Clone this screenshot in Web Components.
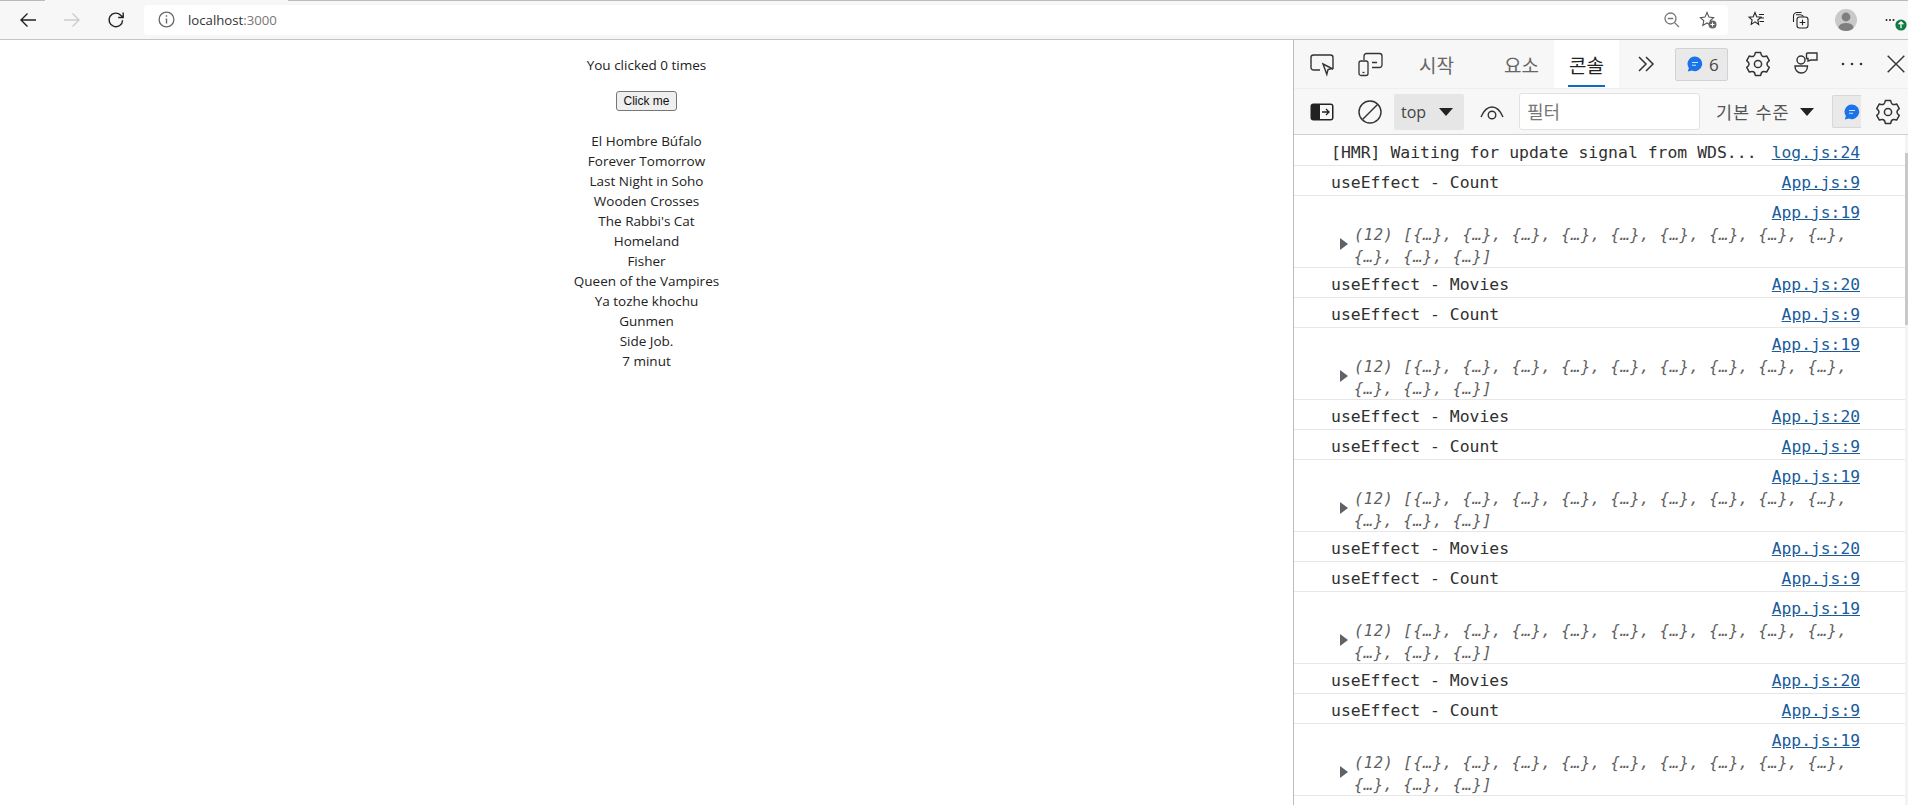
<!DOCTYPE html>
<html lang="ko"><head><meta charset="utf-8"><title>localhost:3000</title>
<style>
html,body{margin:0;height:805px;overflow:hidden;background:#fff;font-family:"Open Sans","Noto Sans CJK KR",sans-serif}
browser-window{height:805px}
</style></head><body>
<browser-window>
  <browser-toolbar></browser-toolbar>
  <div slot="page" style="display:contents"><demo-page></demo-page></div>
  <dev-tools slot="tools"></dev-tools>
</browser-window>
<script>
const S=(w,h,body,extra='')=>`<svg width="${w}" height="${h}" viewBox="0 0 ${w} ${h}" fill="none" stroke="currentColor" stroke-width="1.3" style="display:block;flex:none;overflow:visible;${extra}">${body}</svg>`;
const gearPath=(()=>{const p=(deg,r)=>{const t=deg*Math.PI/180;return (13+r*Math.cos(t)).toFixed(2)+' '+(13+r*Math.sin(t)).toFixed(2)};let d='';for(let i=0;i<6;i++){const a=i*60-90;d+=(i?'L':'M')+p(a-13,11.8)+' L'+p(a+13,11.8)+' Q'+p(a+30,6.6)+' '+p(a+47,11.8)+' '}return d+'Z'})();
const gear=()=>S(26,26,`<path d="${gearPath}" stroke-width="1.500" stroke-linejoin="round"/><circle cx="13" cy="13" r="3.600" stroke-width="1.500"/>`);
const bubble=`<svg width="16" height="16" viewBox="0 0 16 16" style="display:block;flex:none"><path d="M8 .5a7.300 7.300 0 1 1-3 14L.8 15.600l1.100-3.600A7.300 7.300 0 0 1 8 .5z" fill="#1a73e8"/><path d="M5 6.500h6M5 9.200h4" stroke="#cfe2fb" stroke-width="1.100"/></svg>`;
function def(name,html,init){customElements.define(name,class extends HTMLElement{constructor(){super();this.attachShadow({mode:'open'}).innerHTML=typeof html==='function'?html(this):html}connectedCallback(){init&&init(this)}})}

def('browser-window',`<style>
:host{display:block;width:1908px}
.main{display:flex;height:765px}
.p{width:1293px;flex:none}.t{flex:1;min-width:0}
</style><slot></slot><div class="main"><div class="p"><slot name="page"></slot></div><div class="t"><slot name="tools"></slot></div></div>`);

def('browser-toolbar',`<style>
:host{display:flex;align-items:center;height:39px;background:#f7f7f7;border-bottom:1px solid #c4c4c4;color:#222;box-sizing:content-box;position:relative}
.strip{position:absolute;left:0;right:0;top:0;height:1px;background:linear-gradient(90deg,#bbb 45px,#f7f7f7 45px,#f7f7f7 288px,#bbb 288px)}
.nav{display:flex;align-items:center;flex:none}
.bar{margin-left:19px;width:1584px;height:30px;background:#fff;border-radius:4px;display:flex;align-items:center;flex:none;box-sizing:border-box;padding-left:14px}
.url{margin-left:13px;font:13.200px "Open Sans",sans-serif;color:#333}.url span{color:#777}
.right{margin-left:auto;display:flex;align-items:center;gap:0;color:#555}
.ava{width:22px;height:22px;border-radius:50%;background:#c9c9c9;overflow:hidden}
</style><div class="strip"></div><div class="nav" style="padding-left:19px">
${S(18,16,'<path d="M17 8H2M8.500 1.500 2 8l6.500 6.500" stroke-width="1.400"/>')}
<span style="margin-left:26px;color:#ccc">${S(18,16,'<path d="M1 8h15M9.500 1.500 16 8l-6.500 6.500" stroke-width="1.400"/>')}</span>
<span style="margin-left:26px">${S(18,18,'<path d="M15.600 9.200a6.800 6.800 0 1 1-1.900-5L16 6.300M16.200 1.500v5h-5" stroke-width="1.400"/>')}</span></div>
<div class="bar"><span style="color:#666">${S(17,17,'<circle cx="8.500" cy="8.500" r="7.400"/><path d="M8.500 7.500v5M8.500 4.200v1.600" stroke-width="1.400"/>')}</span><span class="url">localhost<span>:3000</span></span>
<div class="right" style="color:#777"><span style="margin-right:19px">${S(16,16,'<circle cx="6.500" cy="6.500" r="5.500"/><path d="M3.800 6.500h5.400M10.600 10.600 15 15"/>')}</span>
<span style="margin-right:11px;color:#555">${S(18,18,'<path d="M8 1.500l2 4.600 4.600.5-3.400 3.200 1 4.600L8 12l-4.200 2.400 1-4.600L1.400 6.600 6 6.100z" stroke-width="1.100"/><circle cx="13.500" cy="13.500" r="4" fill="#666" stroke="none"/><path d="M11.500 13.500h4M13.500 11.500v4" stroke="#fff" stroke-width="1"/>')}</span></div></div>
<div class="right" style="flex:1;color:#222;justify-content:flex-start">
<span style="margin-left:20px">${S(17,17,'<path d="M7 1.500l1.700 4.200 4.300.4-3.200 2.900.9 4.500L7 10.900l-3.800 2.500.9-4.500L1 6.100l4.200-.4zM11 3.500h5M12.500 7h3.500M11.500 10.500h4.500" stroke-width="1.100"/>')}</span>
<span style="margin-left:26px">${S(18,18,'<path d="M2.500 11V5.200C2.500 3 4 1.500 6 1.500h4.500M5 3.800h4.500c1.500 0 2.200 1 3 1.800" stroke-width="1.100"/><rect x="6" y="6" width="11" height="11" rx="2.500" stroke-width="1.100"/><path d="M11.500 8.700v5.600M8.700 11.500h5.600" stroke-width="1.100"/>')}</span>
<span style="margin-left:26px" class="ava"><svg width="22" height="22" viewBox="0 0 22 22" style="display:block"><circle cx="11" cy="8" r="4.400" fill="#7f7f7f"/><ellipse cx="11" cy="18.500" rx="7.500" ry="4.600" fill="#7f7f7f"/></svg></span>
<span style="margin-left:28px;position:relative;width:22px;height:22px;display:block"><svg width="22" height="22" viewBox="0 0 22 22" style="display:block"><circle cx="1.500" cy="11" r="1" fill="#222"/><circle cx="5" cy="11" r="1" fill="#222"/><circle cx="8.500" cy="11" r="1" fill="#222"/><circle cx="16" cy="16" r="5.600" fill="#107c41"/><path d="M16 19.300v-6.200M13.600 15.300 16 13l2.400 2.300" stroke="#fff" stroke-width="1.300" fill="none"/></svg></span>
</div>`);

def('demo-page',`<style>
:host{display:block;text-align:center;font:13.500px/20px "Open Sans","Noto Sans",sans-serif;color:#222;padding-top:15px}
p{margin:0}
button{display:block;margin:16px auto 20px;width:61px;height:20px;box-sizing:border-box;padding:0;font:12px "Liberation Sans",Arial,sans-serif;color:#111;background:#efefef;border:1px solid #767676;border-radius:3px}
</style><p>You clicked 0 times</p><button>Click me</button><div id="l"></div>`,
el=>{el.shadowRoot.getElementById('l').innerHTML=["El Hombre Búfalo","Forever Tomorrow","Last Night in Soho","Wooden Crosses","The Rabbi's Cat","Homeland","Fisher","Queen of the Vampires","Ya tozhe khochu","Gunmen","Side Job.","7 minut"].map(t=>`<div>${t}</div>`).join('')});

def('tool-tab',`<style>
:host{display:flex;align-items:center;justify-content:center;height:48px;box-sizing:border-box;font:19px "Noto Sans CJK KR",sans-serif;color:#666;padding:0 13px;position:relative;white-space:nowrap}
:host([active]){background:#fff;color:#222}
:host([active])::after{content:"";position:absolute;left:14px;right:14px;bottom:1px;height:2px;background:#0f6cbd}
</style><slot></slot>`);

def('console-row',h=>{
 const n=h.getAttribute('kind');const src=h.getAttribute('src');
 const link=`<a>${src}</a>`;
 const style=`<style>
:host{display:block;box-sizing:border-box;height:30px;border-bottom:1px solid #e6e6e6;font:16.450px/22px "DejaVu Sans Mono","Liberation Mono",monospace;color:#303030;padding:6px 48px 0 37px;white-space:pre}
:host([kind=arr]){height:72px;padding-top:6px}
.one{display:flex;justify-content:space-between}
a{color:#1a5b9c;text-decoration:underline;font-size:16.300px}
.top{text-align:right}
.arr{position:relative;padding-left:23px;color:#5e5e5e;font-style:italic;font-size:15.400px;letter-spacing:.6px}
.tri{position:absolute;left:9px;top:13.500px;width:0;height:0;border-left:8px solid #5f6368;border-top:6.500px solid transparent;border-bottom:6.500px solid transparent}
</style>`;
 if(n==='arr')return style+`<div class="top">${link}</div><div class="arr"><i class="tri"></i>(12) [{…}, {…}, {…}, {…}, {…}, {…}, {…}, {…}, {…},
{…}, {…}, {…}]</div>`;
 return style+`<div class="one"><span><slot></slot></span>${link}</div>`;
});

def('dev-tools',`<style>
:host{display:block;height:765px;overflow:hidden;border-left:1px solid #bdbdbd;box-sizing:border-box;background:#fff;position:relative;color:#333}
.a,.b{display:flex;align-items:center;background:#f7f7f7;flex:none}
.a{height:48px}
.b{height:47px;border-bottom:1px solid #d0d0d0;border-top:1px solid #eee;box-sizing:border-box}
.badge{display:flex;align-items:center;gap:6px;box-sizing:border-box;height:33px;width:53px;padding-left:11px;background:#e9e9e9;border:1px solid #d2d2d2;border-radius:2px;font:17px "Open Sans",sans-serif;color:#444}
.sel{display:flex;align-items:center;box-sizing:border-box;width:70px;height:36px;background:#e6e6e6;border-radius:2px;padding-left:7px;font:16px "Open Sans",sans-serif;color:#444}
.inp{box-sizing:border-box;width:181px;height:37px;background:#fff;border:1px solid #e2e2e2;border-radius:3px;padding-left:7px;font:18px/35px "Noto Sans CJK KR",sans-serif;color:#777}
.lvl{font:17.500px "Noto Sans CJK KR",sans-serif;color:#555;white-space:nowrap;letter-spacing:.8px}
.tri{width:0;height:0;border-top:8px solid #222;border-left:7px solid transparent;border-right:7px solid transparent;flex:none}
.iss{box-sizing:border-box;width:29px;height:33px;background:#e9e9e9;border:1px solid #d8d8d8;border-right:0;border-radius:2px 0 0 2px;display:flex;align-items:center;padding-left:11px}
.sb{position:absolute;right:0;top:113px;width:3px;height:172px;background:#c8c8c8}
.scr{position:absolute;right:0;top:95px;bottom:0;width:3px;background:#f3f3f3}
console-row:first-child{height:31px;padding-top:7px}
</style>
<div class="a">
<span style="margin-left:16px">${S(24,22,'<path d="M10 17H3.500A2.500 2.500 0 0 1 1 14.500v-10A2.500 2.500 0 0 1 3.500 2h17A2.500 2.500 0 0 1 23 4.500v10a2.500 2.500 0 0 1-1 2" stroke-width="1.400"/><path d="M13 11l9 4.500-4 1-1.200 4.800z" stroke-width="1.400" fill="#f7f7f7"/>')}</span>
<span style="margin-left:24px">${S(24,24,'<path d="M6 8V4a2.500 2.500 0 0 1 2.500-2.500h13A2.500 2.500 0 0 1 24 4v9a2.500 2.500 0 0 1-2.500 2.500H14M14 10.500h5" stroke-width="1.300"/><rect x="1" y="9" width="9" height="14.500" rx="2" stroke-width="1.300"/><path d="M4.500 20.500h2" stroke-width="1.300"/>')}</span>
<tool-tab style="margin-left:24px">시작</tool-tab>
<tool-tab style="margin-left:24px">요소</tool-tab>
<tool-tab active style="margin-left:2px;padding:0 15px">콘솔</tool-tab>
<span style="margin-left:19px">${S(17,16,'<path d="M1 1l7 7-7 7M8 1l7 7-7 7" stroke-width="1.500"/>')}</span>
<span style="margin-left:20px" class="badge">${bubble}<span>6</span></span>
<span style="margin-left:17px">${gear()}</span>
<span style="margin-left:23px">${S(24,24,'<path d="M11 8a4 4 0 1 1-8 0 4 4 0 0 1 8 0zM1 14h12.500c0 4-2.500 7-6.300 7C3.500 21 1 18 1 14z" stroke-width="1.400"/><path d="M14 9V6.500h-1.500V2a1 1 0 0 1 1-1H23v7h-6z" stroke-width="1.400"/>')}</span>
<span style="margin-left:22px">${S(24,6,'<circle cx="3" cy="3" r="1.300" fill="currentColor" stroke="none"/><circle cx="12" cy="3" r="1.300" fill="currentColor" stroke="none"/><circle cx="21" cy="3" r="1.300" fill="currentColor" stroke="none"/>')}</span>
<span style="margin-left:23px">${S(18,18,'<path d="M.7.7l16.600 16.600M17.300.7.700 17.300" stroke-width="1.400"/>')}</span>
</div>
<div class="b">
<span style="margin-left:16px">${S(24,18,'<rect x=".5" y=".5" width="23" height="17" rx="3" fill="#222" stroke="none"/><path d="M10 2h11a1 1 0 0 1 1 1v12a1 1 0 0 1-1 1H10z" fill="#f7f7f7" stroke="none"/><path d="M12 9h7M16 6l3 3-3 3" stroke="#222" stroke-width="1.300"/>')}</span>
<span style="margin-left:24px">${S(24,24,'<circle cx="12" cy="12" r="11" stroke-width="1.400"/><path d="M4.500 19.500l15-15" stroke-width="1.400"/>')}</span>
<span style="margin-left:12px" class="sel">top<i class="tri" style="margin-left:13px"></i></span>
<span style="margin-left:16px">${S(24,14,'<path d="M1 12C4 5 8 2 12 2s8 3 11 10" stroke-width="1.400"/><circle cx="12" cy="10" r="3.800" stroke-width="1.400"/>')}</span>
<span style="margin-left:15px" class="inp">필터</span>
<span style="margin-left:16px" class="lvl">기본 수준</span>
<i class="tri" style="margin-left:11px"></i>
<span style="margin-left:18px" class="iss">${bubble}</span>
<span style="margin-left:14px">${gear()}</span>
</div>
<div id="rows"></div>
<div class="scr"></div><div class="sb"></div>`,
el=>{
 let h=`<console-row src="log.js:24">[HMR] Waiting for update signal from WDS...</console-row>`;
 for(let i=0;i<5;i++){h+=`<console-row src="App.js:9">useEffect - Count</console-row><console-row kind="arr" src="App.js:19"></console-row>`;if(i<4)h+=`<console-row src="App.js:20">useEffect - Movies</console-row>`}
 el.shadowRoot.getElementById('rows').innerHTML=h;
});
</script>
</body></html>
